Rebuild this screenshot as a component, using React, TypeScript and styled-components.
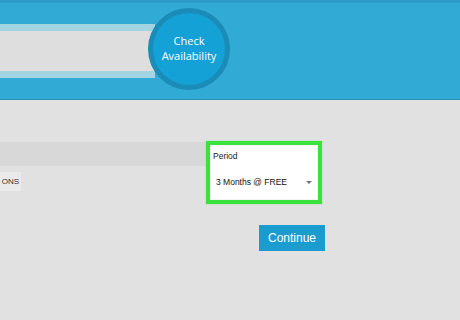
import React from 'react'
import styled, { createGlobalStyle } from 'styled-components'

const GlobalStyle = createGlobalStyle`
  html, body {
    margin: 0;
    padding: 0;
    background: #e1e1e1;
    font-family: 'Open Sans', 'Liberation Sans', sans-serif;
  }
  #root {
    width: 460px;
    height: 320px;
    overflow: hidden;
  }
`

const Header = styled.header`
  height: 96px;
  background: #31aad6;
  border-top: 3px solid #2a9cc5;
  border-bottom: 1px solid #2a8db2;
  display: flex;
  align-items: center;
`

const SearchBox = styled.div`
  width: 155px;
  height: 40px;
  background: #dedede;
  border-top: 7px solid #a3d4e2;
  border-bottom: 7px solid #a3d4e2;
`

const CheckButton = styled.button`
  width: 82px;
  height: 82px;
  margin: -4px 0 0 -7px;
  border-radius: 50%;
  border: 5px solid #1a8cb7;
  background: #14a1d5;
  color: #ffffff;
  font-family: 'Open Sans', sans-serif;
  font-size: 11px;
  line-height: 15px;
  padding: 0 0 3px;
  display: flex;
  align-items: center;
  justify-content: center;
  text-align: center;
  box-sizing: border-box;
`

const Body = styled.main`
  padding-top: 41px;
`

const FormRow = styled.div`
  display: flex;
  align-items: flex-start;
`

const LeftColumn = styled.div`
  width: 206px;
  display: flex;
  flex-direction: column;
  padding-top: 1px;
`

const Band = styled.div`
  height: 24px;
  background: #d8d8d8;
`

const OptionButton = styled.div`
  margin-top: 6px;
  width: 19px;
  height: 19px;
  background: #eaeaea;
  font-family: 'Liberation Sans', sans-serif;
  font-size: 8px;
  color: #333;
  display: flex;
  align-items: center;
  justify-content: flex-end;
  overflow: hidden;
  white-space: nowrap;
  padding-right: 2px;
`

const PeriodBox = styled.div`
  width: 105px;
  height: 49px;
  border: 4px solid #3ce23c;
  background: #ffffff;
  box-shadow: inset 0 0 2px rgba(0, 0, 0, 0.15), 0 0 1px #6bea6b;
  display: flex;
  flex-direction: column;
  padding: 6px 0 0 3px;
`

const Label = styled.div`
  font-family: 'Liberation Sans', sans-serif;
  font-size: 8.5px;
  color: #222;
`

const SelectRow = styled.div`
  margin-top: 16px;
  display: flex;
  align-items: center;
  justify-content: space-between;
  padding: 0 6px 0 3px;
`

const SelectValue = styled.span`
  font-family: 'Liberation Sans', sans-serif;
  font-size: 8.5px;
  color: #111;
`

const Caret = styled.span`
  width: 0;
  height: 0;
  border-left: 3px solid transparent;
  border-right: 3px solid transparent;
  border-top: 3px solid #777;
`

const Actions = styled.div`
  display: flex;
  justify-content: flex-end;
  padding-right: 135px;
  margin-top: 21px;
`

const ContinueButton = styled.button`
  width: 66px;
  height: 26px;
  background: #1b9ccf;
  border: none;
  color: #ffffff;
  font-family: 'Liberation Sans', sans-serif;
  font-size: 12px;
  padding: 0;
`

export default function App() {
  return (
    <>
      <GlobalStyle />
      <Header>
        <SearchBox />
        <CheckButton>
          Check
          <br />
          Availability
        </CheckButton>
      </Header>
      <Body>
        <FormRow>
          <LeftColumn>
            <Band />
            <OptionButton>ONS</OptionButton>
          </LeftColumn>
          <PeriodBox>
            <Label>Period</Label>
            <SelectRow>
              <SelectValue>3 Months @ FREE</SelectValue>
              <Caret />
            </SelectRow>
          </PeriodBox>
        </FormRow>
        <Actions>
          <ContinueButton>Continue</ContinueButton>
        </Actions>
      </Body>
    </>
  )
}
